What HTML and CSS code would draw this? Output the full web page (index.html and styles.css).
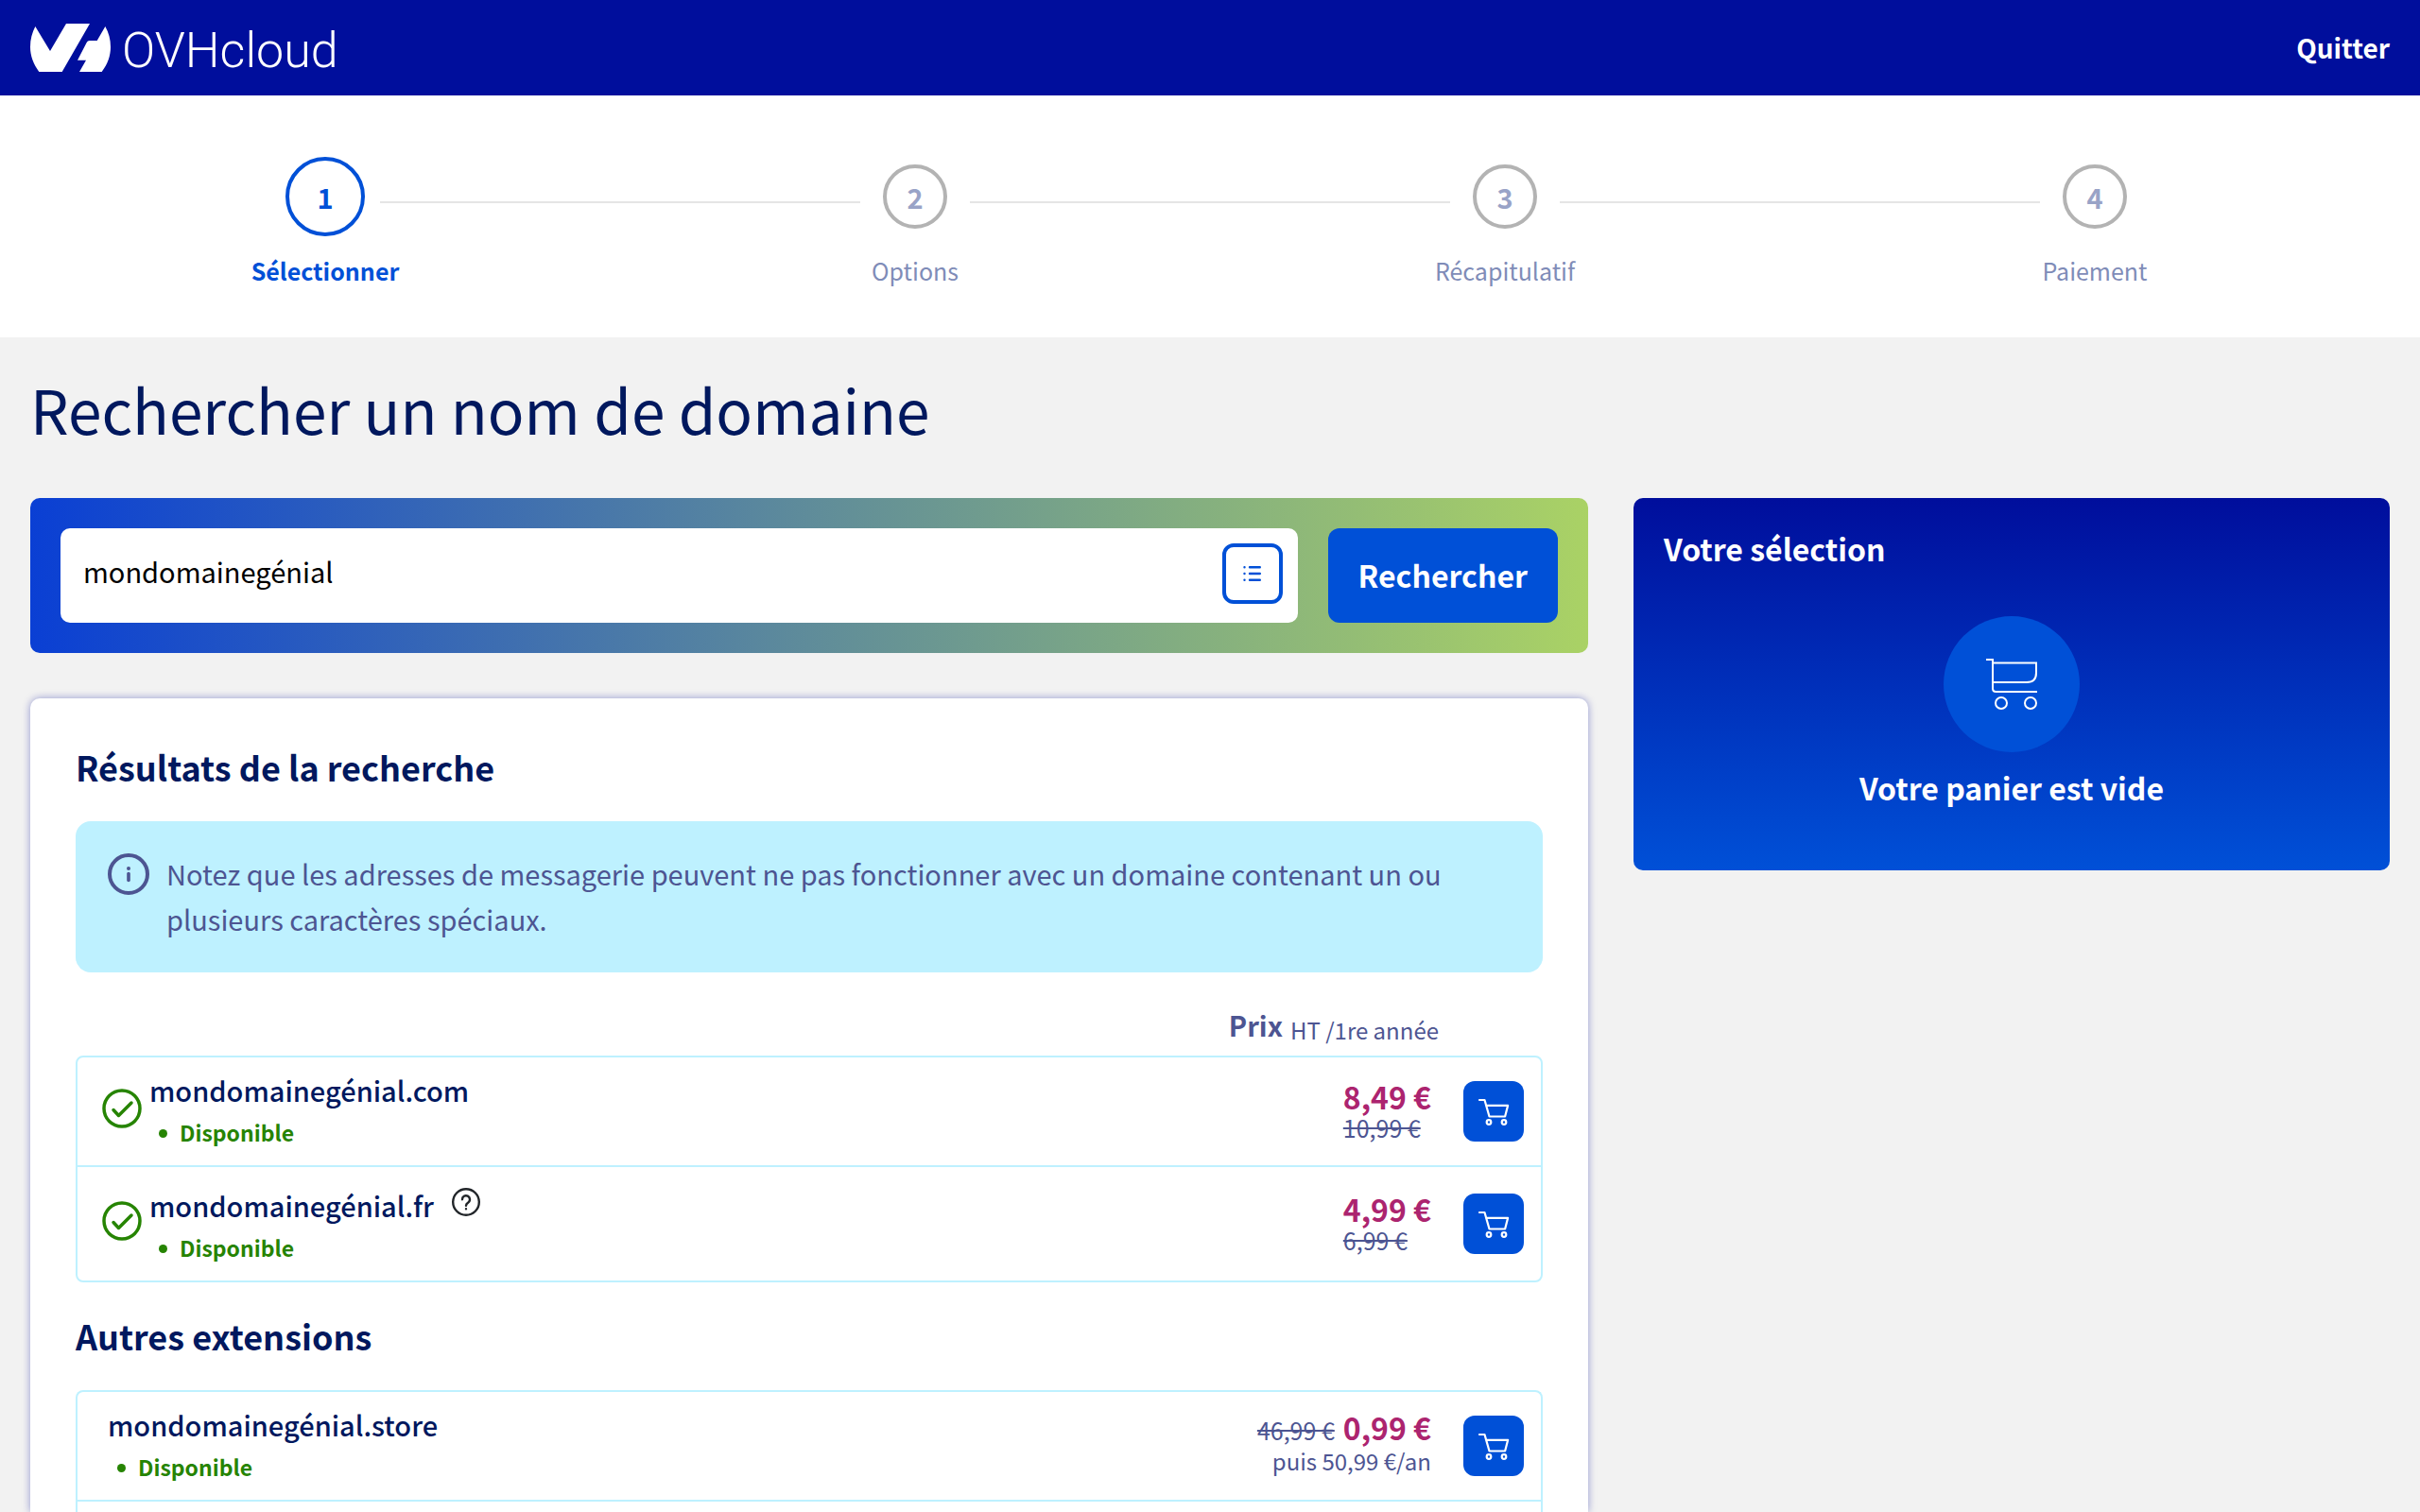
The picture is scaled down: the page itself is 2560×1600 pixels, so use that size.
FILE: index.html
```html
<!DOCTYPE html>
<html lang="fr">
<head>
<meta charset="utf-8">
<meta name="viewport" content="width=device-width, initial-scale=1">
<title>OVHcloud – Rechercher un nom de domaine</title>
<link rel="stylesheet" href="styles.css">
</head>
<body>
<svg class="sprite" aria-hidden="true">
  <symbol id="cart" viewBox="0 0 64 64">
    <g fill="none" stroke="currentColor" stroke-width="2.200" stroke-linecap="round" stroke-linejoin="round">
      <path d="M17 20h5.500l5 17.500h16.600l3-11.600H24"/>
      <circle cx="27" cy="43.500" r="2.300"/>
      <circle cx="43" cy="43.500" r="2.300"/>
    </g>
  </symbol>
  <symbol id="check" viewBox="0 0 42 42">
    <g fill="none" stroke="currentColor" stroke-linecap="round" stroke-linejoin="round">
      <circle cx="21" cy="21" r="19" stroke-width="3.500"/>
      <path d="M12 22.500l5.500 6L31 15" stroke-width="3.500"/>
    </g>
  </symbol>
</svg>

<header class="topbar">
  <a class="brand" href="#">
    <svg class="brand-mark" viewBox="96 78 255 153" aria-hidden="true">
      <path fill="currentColor" d="M112 87L159 165L210 78H285L197 231H124C106 205 96 180 96 152C96 128 102 106 112 87Z"/>
      <path fill="currentColor" d="M334 87L308 132H284Q278 132 275 138L246 194H273L252 231H323C342 205 351 180 351 152C351 128 345 106 334 87Z"/>
    </svg>
    <span class="brand-name">OVHcloud</span>
  </a>
  <a class="quit" href="#">Quitter</a>
</header>

<nav class="steps" aria-label="Étapes de la commande">
  <ol class="steps-list">
    <li class="step step-current" aria-current="step"><div class="step-track"><span class="step-slot"><span class="step-dot">1</span></span></div><span class="step-label">Sélectionner</span></li>
    <li class="step"><div class="step-track"><span class="step-slot"><span class="step-dot">2</span></span></div><span class="step-label">Options</span></li>
    <li class="step"><div class="step-track"><span class="step-slot"><span class="step-dot">3</span></span></div><span class="step-label">Récapitulatif</span></li>
    <li class="step"><div class="step-track"><span class="step-slot"><span class="step-dot">4</span></span></div><span class="step-label">Paiement</span></li>
  </ol>
</nav>

<main class="page">
  <h1 class="page-title">Rechercher un nom de domaine</h1>
  <div class="columns">
    <div class="main-column">
      <form class="search">
        <div class="search-field">
          <input class="search-input" type="text" aria-label="Nom de domaine" value="mondomainegénial">
          <button class="list-button" type="button" aria-label="Recherche multiple">
            <svg viewBox="0 0 64 64" aria-hidden="true"><g stroke="currentColor" stroke-width="2.400" stroke-linecap="round"><path d="M23.500 25.300h.01M23.500 32h.01M23.500 38.700h.01M29 25.300h10.800M29 32h10.800M29 38.700h10.800"/></g></svg>
          </button>
        </div>
        <button class="search-button" type="submit">Rechercher</button>
      </form>

      <section class="results">
        <h2 class="section-title">Résultats de la recherche</h2>
        <div class="notice">
          <svg class="notice-icon" viewBox="0 0 44 44" aria-hidden="true">
            <circle cx="22" cy="22" r="20" fill="none" stroke="currentColor" stroke-width="4"/>
            <circle cx="22" cy="16" r="2" fill="currentColor"/>
            <path d="M22 21.500v7" stroke="currentColor" stroke-width="3.600" stroke-linecap="round"/>
          </svg>
          <p class="notice-text">Notez que les adresses de messagerie peuvent ne pas fonctionner avec un domaine contenant un ou plusieurs caractères spéciaux.</p>
        </div>
        <div class="price-head"><strong class="price-head-title">Prix</strong><span class="price-head-unit">HT /1re année</span></div>

        <div class="domains">
          <table class="domains-table" aria-label="Domaines recherchés">
            <tr class="domain">
              <td class="cell-state"><svg class="check" role="img" aria-label="Disponible"><use href="#check"/></svg></td>
              <td class="cell-name"><div class="name">mondomainegénial.com</div><div class="status">Disponible</div></td>
              <td class="cell-price"><div class="price-stack"><strong class="price">8,49 €</strong><del class="old-price">10,99 €</del></div></td>
              <td class="cell-action"><button class="cart-button" type="button" aria-label="Ajouter mondomainegénial.com au panier"><svg><use href="#cart"/></svg></button></td>
            </tr>
            <tr class="domain">
              <td class="cell-state"><svg class="check" role="img" aria-label="Disponible"><use href="#check"/></svg></td>
              <td class="cell-name">
                <div class="name name-help">mondomainegénial.fr
                  <button class="help" type="button" aria-label="Aide"><svg viewBox="0 0 32 32" aria-hidden="true"><g fill="none" stroke="currentColor" stroke-width="2.400" stroke-linecap="round"><circle cx="16" cy="16" r="13.800"/><path d="M12 13.300a4 4 0 1 1 6.300 3.200c-1.500 1-2.300 1.600-2.300 3.200M16 23.200v.1"/></g></svg></button>
                </div>
                <div class="status">Disponible</div>
              </td>
              <td class="cell-price"><div class="price-stack"><strong class="price">4,99 €</strong><del class="old-price">6,99 €</del></div></td>
              <td class="cell-action"><button class="cart-button" type="button" aria-label="Ajouter mondomainegénial.fr au panier"><svg><use href="#cart"/></svg></button></td>
            </tr>
          </table>
        </div>

        <h2 class="section-title section-title-next">Autres extensions</h2>
        <div class="domains domains-open">
          <table class="domains-table" aria-label="Autres extensions">
            <tr class="domain">
              <td class="cell-name cell-first"><div class="name">mondomainegénial.store</div><div class="status">Disponible</div></td>
              <td class="cell-price"><div class="price-line"><del class="old-price">46,99 €</del><strong class="price">0,99 €</strong></div><div class="renewal">puis 50,99 €/an</div></td>
              <td class="cell-action"><button class="cart-button" type="button" aria-label="Ajouter mondomainegénial.store au panier"><svg><use href="#cart"/></svg></button></td>
            </tr>
          </table>
        </div>
      </section>
    </div>

    <aside class="basket">
      <h2 class="basket-title">Votre sélection</h2>
      <svg class="basket-icon" viewBox="0 0 144 144" aria-hidden="true">
        <circle cx="72" cy="72" r="72" fill="#0050d7"/>
        <g fill="none" stroke="#fff" stroke-width="2">
          <path d="M45 46h7v30.500q0 3.500 3.500 3.500H99M52 49.500h46V60q0 10-10 10H52"/>
          <circle cx="61" cy="92" r="6"/>
          <circle cx="92" cy="92" r="6"/>
        </g>
      </svg>
      <p class="basket-empty">Votre panier est vide</p>
    </aside>
  </div>
</main>
</body>
</html>
```

FILE: styles.css
```css
* {
  box-sizing: border-box;
}

body {
  display: flex;
  flex-direction: column;
  min-height: 100vh;
  margin: 0;
  background: #f2f2f2;
  color: #00185e;
  font-family: "Noto Sans CJK SC", "Noto Sans", sans-serif;
  font-size: 29px;
  line-height: 48px;
}

h1,
h2,
p,
ol {
  margin: 0;
  padding: 0;
}

button,
input {
  border: 0;
  padding: 0;
  font: inherit;
}

.sprite {
  display: none;
}

/* Top bar */
.topbar {
  display: flex;
  align-items: center;
  justify-content: space-between;
  height: 101px;
  padding: 0 32px;
  background: #000e9c;
}

.brand {
  display: flex;
  align-items: center;
  gap: 12px;
  color: #fff;
  text-decoration: none;
}

.brand-mark {
  width: 85px;
  height: 51px;
}

.brand-name {
  padding-top: 6px;
  font-family: Roboto, sans-serif;
  font-size: 52px;
  font-weight: 300;
}

.quit {
  padding-bottom: 2px;
  color: #fff;
  font-size: 28px;
  font-weight: 700;
  text-decoration: none;
}

/* Steps */
.steps {
  padding: 65px 32px 53px;
  background: #fff;
}

.steps-list {
  display: flex;
  list-style: none;
}

.step {
  flex: 1;
  color: #7f8cb8;
  font-size: 25px;
  line-height: 36px;
  text-align: center;
}

.step-track {
  display: flex;
  align-items: center;
  gap: 16px;
  margin-bottom: 18px;
}

.step-track::before,
.step-track::after {
  content: "";
  flex: 1;
  height: 2px;
  margin-top: 12px;
  background: #e5e5e5;
}

.step:first-child .step-track::before,
.step:last-child .step-track::after {
  visibility: hidden;
}

.step-slot {
  display: flex;
  align-items: center;
  justify-content: center;
  width: 84px;
  height: 84px;
}

.step-dot {
  display: flex;
  align-items: center;
  justify-content: center;
  width: 68px;
  height: 68px;
  border: 4px solid #b3b3b3;
  border-radius: 50%;
  color: #99a3c7;
  font-size: 29px;
  font-weight: 700;
}

.step-current {
  color: #0050d7;
}

.step-current .step-dot {
  width: 84px;
  height: 84px;
  border-color: #0050d7;
  color: #0050d7;
}

.step-current .step-label {
  font-weight: 700;
}

/* Page */
.page {
  display: flex;
  flex: 1;
  flex-direction: column;
  padding: 27px 32px 0;
}

.page-title {
  margin-bottom: 47px;
  font-size: 64px;
  font-weight: 400;
  line-height: 96px;
}

.columns {
  display: grid;
  flex: 1;
  grid-template-columns: repeat(12, 1fr);
  gap: 48px;
}

.main-column {
  display: flex;
  flex-direction: column;
  grid-column: span 8;
  gap: 48px;
}

/* Search */
.search {
  display: flex;
  gap: 32px;
  padding: 32px;
  border-radius: 10px;
  background: linear-gradient(90deg, #0a3fd4, #5f8c9a 50%, #aad265);
}

.search-field {
  display: flex;
  flex: 1;
  align-items: center;
  height: 100px;
  padding: 0 16px 4px 24px;
  border-radius: 10px;
  background: #fff;
}

.search-input {
  flex: 1;
  min-width: 0;
  height: 64px;
  padding-bottom: 6px;
  background: none;
  color: #000;
}

.list-button {
  width: 64px;
  height: 64px;
  padding: 0;
  border: 4px solid #0050d7;
  border-radius: 12px;
  background: #fff;
  color: #0050d7;
}

.list-button svg {
  display: block;
  width: 64px;
  height: 64px;
  margin: -4px;
}

.search-button {
  padding: 0 32px 2px;
  border-radius: 12px;
  background: #0050d7;
  color: #fff;
  font-size: 32px;
  font-weight: 700;
}

/* Results */
.results {
  display: flex;
  flex: 1;
  flex-direction: column;
  padding: 46px 48px 0;
  border-radius: 10px 10px 0 0;
  background: #fff;
  box-shadow: 0 0 8px rgba(0, 14, 156, 0.4);
}

.section-title {
  margin-bottom: 32px;
  font-size: 36px;
  font-weight: 700;
  line-height: 52px;
}

.section-title-next {
  margin-top: 30px;
}

.notice {
  display: flex;
  gap: 18px;
  padding: 31px 34px 33px;
  border-radius: 16px;
  background: #bef1ff;
  color: #4d5592;
}

.notice-icon {
  flex: none;
  width: 44px;
  height: 44px;
  margin-top: 3px;
}

.price-head {
  display: flex;
  align-items: center;
  justify-content: flex-end;
  gap: 8px;
  padding: 31px 110px 9px 0;
  color: #4d5592;
}

.price-head-title {
  font-size: 29px;
}

.price-head-unit {
  margin-top: 12px;
  font-size: 24px;
  line-height: 36px;
}

.domains {
  border: 2px solid #bef1ff;
  border-radius: 8px;
}

.domains-open {
  flex: 1;
  border-bottom: 0;
  border-radius: 8px 8px 0 0;
}

.domains-table {
  width: 100%;
  border-collapse: separate;
  border-spacing: 0;
}

.domains-table td {
  padding: 12px 0 16px;
  vertical-align: middle;
}

.domain + .domain td {
  border-top: 2px solid #bef1ff;
}

.domains-open td {
  border-bottom: 2px solid #bef1ff;
}

.domains-table .cell-state {
  width: 76px;
  padding: 0 0 6px 26px;
}

.check {
  display: block;
  width: 42px;
  height: 42px;
  color: #268403;
}

.domains-table .cell-first {
  padding-left: 32px;
}

.name {
  margin-bottom: 4px;
  font-weight: 500;
  line-height: 44px;
}

.name-help {
  display: flex;
  align-items: center;
  gap: 18px;
  padding-top: 6px;
}

.help {
  width: 32px;
  height: 32px;
  margin-bottom: 6px;
  background: none;
  color: #212529;
}

.help svg,
.cart-button svg {
  display: block;
  width: 100%;
  height: 100%;
}

.status {
  display: flex;
  align-items: center;
  gap: 13px;
  padding-left: 10px;
  color: #268403;
  font-size: 23px;
  font-weight: 700;
  line-height: 38px;
}

.status::before {
  content: "";
  width: 9px;
  height: 9px;
  margin-top: 3px;
  border-radius: 50%;
  background: currentColor;
}

.cell-price {
  text-align: right;
}

.price-stack {
  display: inline-flex;
  flex-direction: column;
  padding-bottom: 4px;
  text-align: left;
}

.price {
  color: #ac246f;
  font-size: 32px;
  font-weight: 700;
  line-height: 36px;
}

.old-price,
.renewal {
  color: #4d5592;
  font-size: 25px;
  line-height: 30px;
}

.renewal {
  font-size: 24px;
  line-height: 36px;
}

.price-line {
  display: flex;
  align-items: baseline;
  justify-content: flex-end;
  gap: 9px;
}

.domains-table .cell-action {
  width: 116px;
  padding: 0 18px 0 34px;
}

.cart-button {
  display: block;
  width: 64px;
  height: 64px;
  border-radius: 12px;
  background: #0050d7;
  color: #fff;
}

/* Basket */
.basket {
  display: flex;
  flex-direction: column;
  grid-column: span 4;
  align-items: center;
  align-self: start;
  padding: 29px 32px 64px;
  border-radius: 10px;
  background: linear-gradient(#000e9c, #0050d7);
  color: #fff;
}

.basket-title {
  align-self: stretch;
  margin-bottom: 48px;
  font-size: 32px;
  font-weight: 700;
}

.basket-icon {
  width: 144px;
  height: 144px;
}

.basket-empty {
  margin-top: 13px;
  font-size: 32px;
  font-weight: 700;
}
```
